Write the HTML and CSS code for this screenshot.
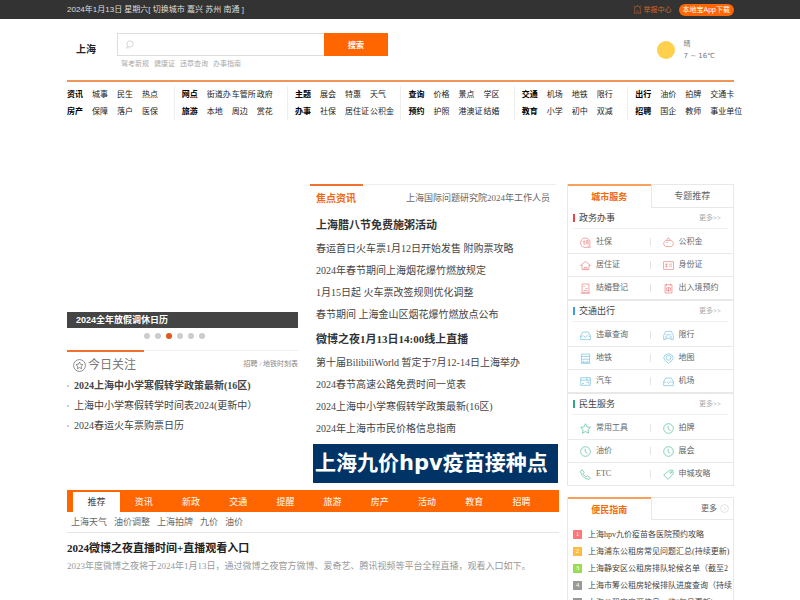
FILE: index.html
```html
<!DOCTYPE html>
<html lang="zh-CN">
<head>
    <meta charset="UTF-8">
    <meta name="viewport" content="width=device-width, initial-scale=1.0">
    <title>上海本地宝</title>
    <link rel="stylesheet" href="styles.css">
</head>
<body>
    <svg class="sprite" aria-hidden="true">
        <symbol id="i-search" viewBox="0 0 16 16"><circle cx="9" cy="7" r="5.5"/><path d="M5 11l-3 3h5"/></symbol>
        <symbol id="i-report" viewBox="0 0 16 16"><path d="M3 14V6a5 4 0 0 1 10 0v8M1 14.5h14M2 1l2 3M8 0v2M14 1l-2 3M6 11h4"/></symbol>
        <symbol id="i-star-circle" viewBox="0 0 16 16"><circle cx="8" cy="8" r="7.3"/><path d="M8 3.8l1.3 2.7 3 .4-2.200 2.100.5 3L8 10.600 5.400 12l.5-3-2.200-2.100 3-.4z"/></symbol>
        <symbol id="i-social" viewBox="0 0 16 16"><path d="M13 13a7 7 0 1 1 1-1.500l1 3.500h-4M6 5v7M4 7h3M9 5h3v3H9zM8 10h5"/></symbol>
        <symbol id="i-fund" viewBox="0 0 16 16"><path d="M5 5C0 6 0 12 4 14h8c4-2 4-8-1-9zM5 5L8 1l3 4M5 8h2"/></symbol>
        <symbol id="i-house" viewBox="0 0 16 16"><path d="M1 8l7-6 7 6h-2v6H3V8zM6 14v-3h4v3"/></symbol>
        <symbol id="i-card" viewBox="0 0 16 16"><rect x="1" y="2.500" width="14" height="11"/><path d="M3 6h4M5 6v4M3 10h4M9 6h4M9 9h4"/></symbol>
        <symbol id="i-doc" viewBox="0 0 16 16"><path d="M3 1.500h10v13H3zM5 5h2M5 11h6M8 8h3M1 14.500h14"/></symbol>
        <symbol id="i-pass" viewBox="0 0 16 16"><path d="M3 2.500h10v12H3zM5 1v3M11 1v3M5 7h6v4H5zM8 6v7"/></symbol>
        <symbol id="i-car" viewBox="0 0 16 16"><path d="M1 14V8l3-5h8l3 5v6zM1 9h3M12 9h3M5 8l3 3 3-4"/></symbol>
        <symbol id="i-limit" viewBox="0 0 16 16"><path d="M1 14V8l3-6h8l3 6v6h-3v-2H4v2zM4 7h8M3 10h3M10 10h3"/></symbol>
        <symbol id="i-metro" viewBox="0 0 16 16"><path d="M2 1.500h12v12H2zM2 5h12M2 9h12M4 12h2M10 12h2M1 15h14"/></symbol>
        <symbol id="i-map" viewBox="0 0 16 16"><path d="M8 15l-5-4-2-4 2-4 5-2 5 2 2 4-2 4z"/><circle cx="8" cy="7" r="3.500"/></symbol>
        <symbol id="i-bus" viewBox="0 0 16 16"><path d="M1 2.500h14v11H1zM1 6h14M10 2v4M3 11h3M9 9h4v2"/></symbol>
        <symbol id="i-star" viewBox="0 0 16 16"><path d="M8 1l2.200 4.700 5 .6-3.700 3.500 1 5.100L8 12.400l-4.500 2.500 1-5.100L.8 6.300l5-.6z"/></symbol>
        <symbol id="i-clock" viewBox="0 0 16 16"><circle cx="8" cy="8" r="7"/><path d="M7.500 4v4.500L11 11"/></symbol>
        <symbol id="i-phone" viewBox="0 0 16 16"><path d="M3 1L1 3c0 6 6 12 12 12l2-2-4-3-2 1.500C7 10.500 5.500 9 4.500 7L6 5z"/></symbol>
        <symbol id="i-tag" viewBox="0 0 16 16"><path d="M9 2l5-.5 1 5.500-7.500 8L1 9z"/><circle cx="11.500" cy="5" r="1.200"/></symbol>
        <symbol id="i-more" viewBox="0 0 16 16"><circle cx="8" cy="8" r="7"/><path d="M7 5l3 3-3 3"/></symbol>
    </svg>

    <div class="topbar">
        <div class="wrap topbar-inner">
            <p>2024年1月13日 星期六[ <a href="#">切换城市</a> <a href="#">嘉兴</a> <a href="#">苏州</a> <a href="#">南通</a> ]</p>
            <div class="topbar-right">
                <a class="report" href="#"><svg class="icon-sm"><use href="#i-report"/></svg>举报中心</a>
                <a class="app" href="#">本地宝App下载</a>
            </div>
        </div>
    </div>

    <header class="wrap header">
        <h1 class="city">上海</h1>
        <div class="search">
            <form class="search-form">
                <label class="search-box"><svg class="icon-sm"><use href="#i-search"/></svg><input type="text" aria-label="搜索内容"></label>
                <button type="submit">搜索</button>
            </form>
            <div class="hot">
                <a href="#">驾考新规</a><a href="#">健康证</a><a href="#">违章查询</a><a href="#">办事指南</a>
            </div>
        </div>
        <div class="weather">
            <span class="sun"></span>
            <p>晴<br>7 ~ 16℃</p>
        </div>
    </header>

    <nav class="wrap nav">
        <div class="nav-group">
            <a href="#"><b>资讯</b></a><a href="#">城事</a><a href="#">民生</a><a href="#">热点</a>
            <a href="#"><b>房产</b></a><a href="#">保障</a><a href="#">落户</a><a href="#">医保</a>
        </div>
        <div class="nav-group">
            <a href="#"><b>网点</b></a><a href="#">街道办</a><a href="#">车管所</a><a href="#">政府</a>
            <a href="#"><b>旅游</b></a><a href="#">本地</a><a href="#">周边</a><a href="#">赏花</a>
        </div>
        <div class="nav-group">
            <a href="#"><b>主题</b></a><a href="#">展会</a><a href="#">特惠</a><a href="#">天气</a>
            <a href="#"><b>办事</b></a><a href="#">社保</a><a href="#">居住证</a><a href="#">公积金</a>
        </div>
        <div class="nav-group">
            <a href="#"><b>查询</b></a><a href="#">价格</a><a href="#">景点</a><a href="#">学区</a>
            <a href="#"><b>预约</b></a><a href="#">护照</a><a href="#">港澳证</a><a href="#">结婚</a>
        </div>
        <div class="nav-group">
            <a href="#"><b>交通</b></a><a href="#">机场</a><a href="#">地铁</a><a href="#">限行</a>
            <a href="#"><b>教育</b></a><a href="#">小学</a><a href="#">初中</a><a href="#">双减</a>
        </div>
        <div class="nav-group">
            <a href="#"><b>出行</b></a><a href="#">油价</a><a href="#">拍牌</a><a href="#">交通卡</a>
            <a href="#"><b>招聘</b></a><a href="#">国企</a><a href="#">教师</a><a href="#">事业单位</a>
        </div>
    </nav>

    <main class="wrap main">
        <div class="content">
            <div class="columns">
                <div class="left">
                    <div class="slide"><a href="#">2024全年放假调休日历</a></div>
                    <div class="dots"><i></i><i></i><i class="on"></i><i></i><i></i><i></i></div>
                    <section class="today">
                        <div class="today-head">
                            <h2><svg class="icon-lg"><use href="#i-star-circle"/></svg>今日关注</h2>
                            <p><a href="#">招聘</a> / <a href="#">地铁时刻表</a></p>
                        </div>
                        <ul>
                            <li><a href="#"><b>2024上海中小学寒假转学政策最新(16区)</b></a></li>
                            <li><a href="#">上海中小学寒假转学时间表2024(更新中）</a></li>
                            <li><a href="#">2024春运火车票购票日历</a></li>
                        </ul>
                    </section>
                </div>

                <section class="focus">
                    <div class="focus-head">
                        <h2>焦点资讯</h2>
                        <a href="#">上海国际问题研究院2024年工作人员</a>
                    </div>
                    <div class="focus-list">
                        <h3><a href="#">上海腊八节免费施粥活动</a></h3>
                        <ul>
                            <li><a href="#">春运首日火车票1月12日开始发售 附购票攻略</a></li>
                            <li><a href="#">2024年春节期间上海烟花爆竹燃放规定</a></li>
                            <li><a href="#">1月15日起 火车票改签规则优化调整</a></li>
                            <li><a href="#">春节期间 上海金山区烟花爆竹燃放点公布</a></li>
                        </ul>
                        <h3><a href="#">微博之夜1月13日14:00线上直播</a></h3>
                        <ul>
                            <li><a href="#">第十届BilibiliWorld 暂定于7月12-14日上海举办</a></li>
                            <li><a href="#">2024春节高速公路免费时间一览表</a></li>
                            <li><a href="#">2024上海中小学寒假转学政策最新(16区)</a></li>
                            <li><a href="#">2024年上海市市民价格信息指南</a></li>
                        </ul>
                    </div>
                    <a class="banner" href="#">上海九价hpv疫苗接种点</a>
                </section>
            </div>

            <section class="feed">
                <div class="feed-tabs">
                    <a class="active" href="#">推荐</a><a href="#">资讯</a><a href="#">新政</a><a href="#">交通</a><a href="#">提醒</a><a href="#">旅游</a><a href="#">房产</a><a href="#">活动</a><a href="#">教育</a><a href="#">招聘</a>
                </div>
                <div class="feed-links">
                    <a href="#">上海天气</a><a href="#">油价调整</a><a href="#">上海拍牌</a><a href="#">九价</a><a href="#">油价</a>
                </div>
                <article>
                    <h3><a href="#">2024微博之夜直播时间+直播观看入口</a></h3>
                    <p>2023年度微博之夜将于2024年1月13日，通过微博之夜官方微博、爱奇艺、腾讯视频等平台全程直播，观看入口如下。</p>
                </article>
            </section>
        </div>

        <aside class="side">
            <div class="panel services">
                <div class="tabs">
                    <a class="active" href="#">城市服务</a>
                    <a href="#">专题推荐</a>
                </div>
                <section class="service red">
                    <div class="service-head"><h3>政务办事</h3><a href="#">更多&gt;&gt;</a></div>
                    <div class="service-grid">
                        <a href="#"><svg class="icon"><use href="#i-social"/></svg>社保</a>
                        <a href="#"><svg class="icon"><use href="#i-fund"/></svg>公积金</a>
                        <a href="#"><svg class="icon"><use href="#i-house"/></svg>居住证</a>
                        <a href="#"><svg class="icon"><use href="#i-card"/></svg>身份证</a>
                        <a href="#"><svg class="icon"><use href="#i-doc"/></svg>结婚登记</a>
                        <a href="#"><svg class="icon"><use href="#i-pass"/></svg>出入境预约</a>
                    </div>
                </section>
                <section class="service blue">
                    <div class="service-head"><h3>交通出行</h3><a href="#">更多&gt;&gt;</a></div>
                    <div class="service-grid">
                        <a href="#"><svg class="icon"><use href="#i-car"/></svg>违章查询</a>
                        <a href="#"><svg class="icon"><use href="#i-limit"/></svg>限行</a>
                        <a href="#"><svg class="icon"><use href="#i-metro"/></svg>地铁</a>
                        <a href="#"><svg class="icon"><use href="#i-map"/></svg>地图</a>
                        <a href="#"><svg class="icon"><use href="#i-bus"/></svg>汽车</a>
                        <a href="#"><svg class="icon"><use href="#i-car"/></svg>机场</a>
                    </div>
                </section>
                <section class="service green">
                    <div class="service-head"><h3>民生服务</h3><a href="#">更多&gt;&gt;</a></div>
                    <div class="service-grid">
                        <a href="#"><svg class="icon"><use href="#i-star"/></svg>常用工具</a>
                        <a href="#"><svg class="icon"><use href="#i-clock"/></svg>拍牌</a>
                        <a href="#"><svg class="icon"><use href="#i-clock"/></svg>油价</a>
                        <a href="#"><svg class="icon"><use href="#i-clock"/></svg>展会</a>
                        <a href="#"><svg class="icon"><use href="#i-phone"/></svg>ETC</a>
                        <a href="#"><svg class="icon"><use href="#i-tag"/></svg>申城攻略</a>
                    </div>
                </section>
            </div>

            <div class="panel guide">
                <div class="tabs">
                    <a class="active" href="#">便民指南</a>
                    <a class="more" href="#">更多<svg class="icon-sm"><use href="#i-more"/></svg></a>
                </div>
                <ol>
                    <li><span>1</span><a href="#">上海hpv九价疫苗各医院预约攻略</a></li>
                    <li><span>2</span><a href="#">上海浦东公租房常见问题汇总(持续更新)</a></li>
                    <li><span>3</span><a href="#">上海静安区公租房排队轮候名单（截至2</a></li>
                    <li><span>4</span><a href="#">上海市筹公租房轮候排队进度查询（持续</a></li>
                    <li><span>5</span><a href="#">上海公租房房源信息一览(每月更新)</a></li>
                </ol>
            </div>
        </aside>
    </main>
</body>
</html>
```
FILE: styles.css
```css
* {
    box-sizing: border-box;
}
body {
    margin: 0;
    font-family: "Liberation Serif", "Noto Sans CJK SC", serif;
    font-size: 8px;
    line-height: 12px;
    color: #444;
    background-color: #fff;
    overflow-x: hidden;
}
h1, h2, h3, p, ul, ol {
    margin: 0;
    padding: 0;
    list-style: none;
}
a {
    color: inherit;
    text-decoration: none;
}
svg {
    flex: none;
    fill: none;
    stroke: currentColor;
    stroke-width: 1;
}
.sprite {
    display: none;
}
.icon-sm {
    width: 9px;
    height: 9px;
}
.icon {
    width: 11px;
    height: 11px;
}
.icon-lg {
    width: 13px;
    height: 13px;
}
.wrap {
    max-width: 668px;
    margin: 0 auto;
    padding: 0 0 0 1px;
}

/* top bar */
.topbar {
    background-color: #333;
    color: #ddd;
    font-family: "Liberation Sans", "Noto Sans CJK SC", sans-serif;
}
.topbar-inner {
    display: flex;
    justify-content: space-between;
    align-items: center;
    height: 19px;
}
.topbar-right {
    display: flex;
    align-items: center;
    gap: 7px;
    font-size: 7px;
}
.report {
    display: flex;
    align-items: center;
    gap: 2px;
    color: #d2642a;
}
.app {
    padding: 0 4px;
    border-radius: 6px;
    background-color: #f60;
    color: #fff;
}

/* search */
.header {
    display: flex;
    height: 61px;
    padding: 14px 18px 0 10px;
    font-family: "Liberation Sans", "Noto Sans CJK SC", sans-serif;
}
.city {
    width: 41px;
    font-size: 10px;
    line-height: 34px;
    color: #222;
}
.search {
    flex: 0 1 271px;
}
.search-form {
    display: flex;
    height: 23px;
}
.search-box {
    flex: 1;
    display: flex;
    align-items: center;
    padding-left: 7px;
    border: 1px solid #ddd;
    border-right: 0;
    color: #bbb;
}
.search-box input {
    flex: 1;
    min-width: 0;
    border: 0;
    outline: 0;
    font-size: 8px;
}
.search button {
    width: 64px;
    border: 0;
    background-color: #f60;
    color: #fff;
    font: bold 8px "Liberation Sans", "Noto Sans CJK SC", sans-serif;
}
.hot {
    display: flex;
    gap: 5px;
    padding: 2px 4px;
    font-size: 7px;
    color: #aaa;
}
.weather {
    display: flex;
    align-items: center;
    gap: 8px;
    height: 34px;
    margin-left: auto;
    padding-right: 1px;
    font-family: "DejaVu Sans", "Noto Sans CJK SC", sans-serif;
    font-size: 7px;
    color: #777;
}
.sun {
    width: 18px;
    height: 18px;
    border-radius: 50%;
    background-color: #ffd04c;
}

/* navigation */
.nav {
    display: flex;
    flex-wrap: nowrap;
    color: #222;
}
.nav::before {
    content: "";
    flex: 0 0 100%;
    height: 2px;
    margin-right: -100%;
    background-color: #f0955a;
}
.nav-group {
    flex: 0 0 17%;
    display: grid;
    grid-template-columns: repeat(4, 25px);
    margin-top: 6px;
    padding-left: 7px;
    border-left: 1px solid #eee;
    line-height: 17px;
    white-space: nowrap;
}
.nav-group:first-child {
    flex-basis: 16%;
    padding-left: 0;
    border-left: 0;
}
.nav b {
    color: #000;
}

/* main */
.main {
    display: grid;
    grid-template-columns: minmax(0, 492fr) minmax(0, 167fr);
    gap: 8px;
    padding-top: 64px;
}
.columns {
    display: grid;
    grid-template-columns: minmax(0, 231fr) minmax(0, 249fr);
    gap: 12px;
}
.slide {
    display: flex;
    align-items: flex-end;
    height: 144px;
}
.slide a {
    flex: 1;
    padding: 0 9px;
    background-color: #444;
    color: #fff;
    font: bold 9px/16px "Liberation Sans", "Noto Sans CJK SC", sans-serif;
}
.dots {
    display: flex;
    justify-content: center;
    gap: 5px;
    padding: 5px 16px 11px 0;
}
.dots i {
    width: 6px;
    height: 6px;
    border-radius: 50%;
    background-color: #ccc;
}
.dots .on {
    background-color: #e4571b;
}
.today-head {
    display: flex;
    justify-content: space-between;
    align-items: center;
    height: 26px;
    border-top: 1px solid #eee;
    font-size: 7px;
    color: #888;
}
.today h2 {
    display: flex;
    align-items: center;
    gap: 2px;
    align-self: flex-start;
    width: 77px;
    margin-top: -1px;
    padding-left: 6px;
    border-top: 2px solid #f07030;
    font-size: 12px;
    font-weight: normal;
    line-height: 26px;
    color: #777;
}
.today li {
    display: flex;
    align-items: center;
    gap: 5px;
    font-size: 10px;
    line-height: 20px;
    white-space: nowrap;
}
.today li::before {
    content: "";
    width: 2px;
    height: 2px;
    background-color: #ccc;
}
.focus-head {
    display: flex;
    justify-content: space-between;
    height: 28px;
    margin-right: 3px;
    padding-right: 6px;
    border-top: 1px solid #eee;
    font-size: 9px;
    line-height: 26px;
    color: #666;
}
.focus-head h2 {
    width: 53px;
    margin-top: -1px;
    padding-left: 6px;
    border-top: 2px solid #f07030;
    font-size: 10px;
    color: #f26a0c;
}
.focus-list {
    padding-left: 6px;
    font-size: 10px;
    line-height: 22px;
    white-space: nowrap;
}
.focus-list h3 {
    font-size: 11px;
    line-height: 26px;
    color: #333;
}
.banner {
    display: block;
    margin: 4px 1px 0 3px;
    padding-left: 2px;
    background-color: #036;
    color: #fff;
    font: bold 21px/39px "DejaVu Sans", "Noto Sans CJK SC", sans-serif;
    white-space: nowrap;
}

/* feed */
.feed {
    margin-top: 7px;
}
.feed-tabs {
    display: flex;
    height: 22px;
    padding: 2px 14px 0 6px;
    background-color: #f60;
    color: #fff;
    font-size: 9px;
    line-height: 20px;
}
.feed-tabs a {
    flex: 1;
    text-align: center;
}
.feed-tabs .active {
    background-color: #fff;
    color: #444;
}
.feed-links {
    display: flex;
    gap: 7px;
    padding-left: 4px;
    border-bottom: 1px solid #e5e5e5;
    font-size: 9px;
    line-height: 20px;
    color: #666;
}
.feed h3 {
    padding-top: 4px;
    font-size: 11px;
    line-height: 22px;
    color: #222;
}
.feed article p {
    font-size: 9px;
    line-height: 14px;
    color: #999;
}

/* side panels */
.panel {
    border: 1px solid #e8e8e8;
    border-top: 0;
}
.tabs {
    display: flex;
    height: 24px;
    font-size: 9px;
    line-height: 22px;
    text-align: center;
    color: #666;
}
.tabs a {
    flex: 0 0 50%;
    border-top: 1px solid #e8e8e8;
    border-bottom: 1px solid #e8e8e8;
    border-left: 1px solid #e8e8e8;
}
.tabs .active {
    border-top: 2px solid #f9a05c;
    border-bottom: 0;
    border-left: 0;
    font-weight: bold;
    color: #f26a0c;
}
.service + .service {
    border-top: 2px solid #e8e8e8;
}
.service-head {
    display: flex;
    justify-content: space-between;
    align-items: center;
    height: 21px;
    margin: 0 5px;
    padding-right: 7px;
    border-bottom: 1px solid #f0f0f0;
    font-size: 7px;
    color: #aaa;
}
.service-head h3 {
    padding-left: 4px;
    border-left: 2px solid currentColor;
    font-size: 9px;
    font-weight: normal;
    line-height: 8px;
    color: #444;
}
.red h3 {
    border-color: #e8434a;
}
.blue h3 {
    border-color: #3aa0dc;
}
.green h3 {
    border-color: #2bab7c;
}
.service-grid {
    display: grid;
    grid-template-columns: 1fr 1fr;
    padding-top: 2px;
    color: #666;
}
.service-grid a {
    display: flex;
    align-items: center;
    gap: 5px;
    height: 23px;
    padding-left: 12px;
    border-bottom: 1px solid #eaeaea;
}
.service-grid a:nth-child(odd)::after {
    content: "";
    width: 1px;
    height: 8px;
    margin-left: auto;
    background-color: #e5e5e5;
}
.service-grid a:nth-last-child(-n+2) {
    height: 22px;
    border-bottom: 0;
}
.red .icon {
    color: #e98080;
}
.blue .icon {
    color: #74bfe0;
}
.green .icon {
    color: #4fbd95;
}
.guide {
    margin-top: 11px;
}
.guide .tabs {
    height: 23px;
}
.guide .more {
    display: flex;
    align-items: center;
    justify-content: flex-end;
    gap: 3px;
    padding-right: 4px;
    font-size: 8px;
}
.more svg {
    color: #ccc;
}
.guide ol {
    padding: 6px 2px 0 5px;
}
.guide li {
    display: flex;
    align-items: center;
    gap: 6px;
    line-height: 17px;
    white-space: nowrap;
}
.guide li span {
    flex: none;
    width: 9px;
    background-color: #999;
    color: #fff;
    font-size: 7px;
    line-height: 9px;
    text-align: center;
}
.guide li:nth-child(1) span {
    background-color: #f77;
}
.guide li:nth-child(2) span {
    background-color: #fb4;
}
.guide li:nth-child(3) span {
    background-color: #9d5;
}
```
